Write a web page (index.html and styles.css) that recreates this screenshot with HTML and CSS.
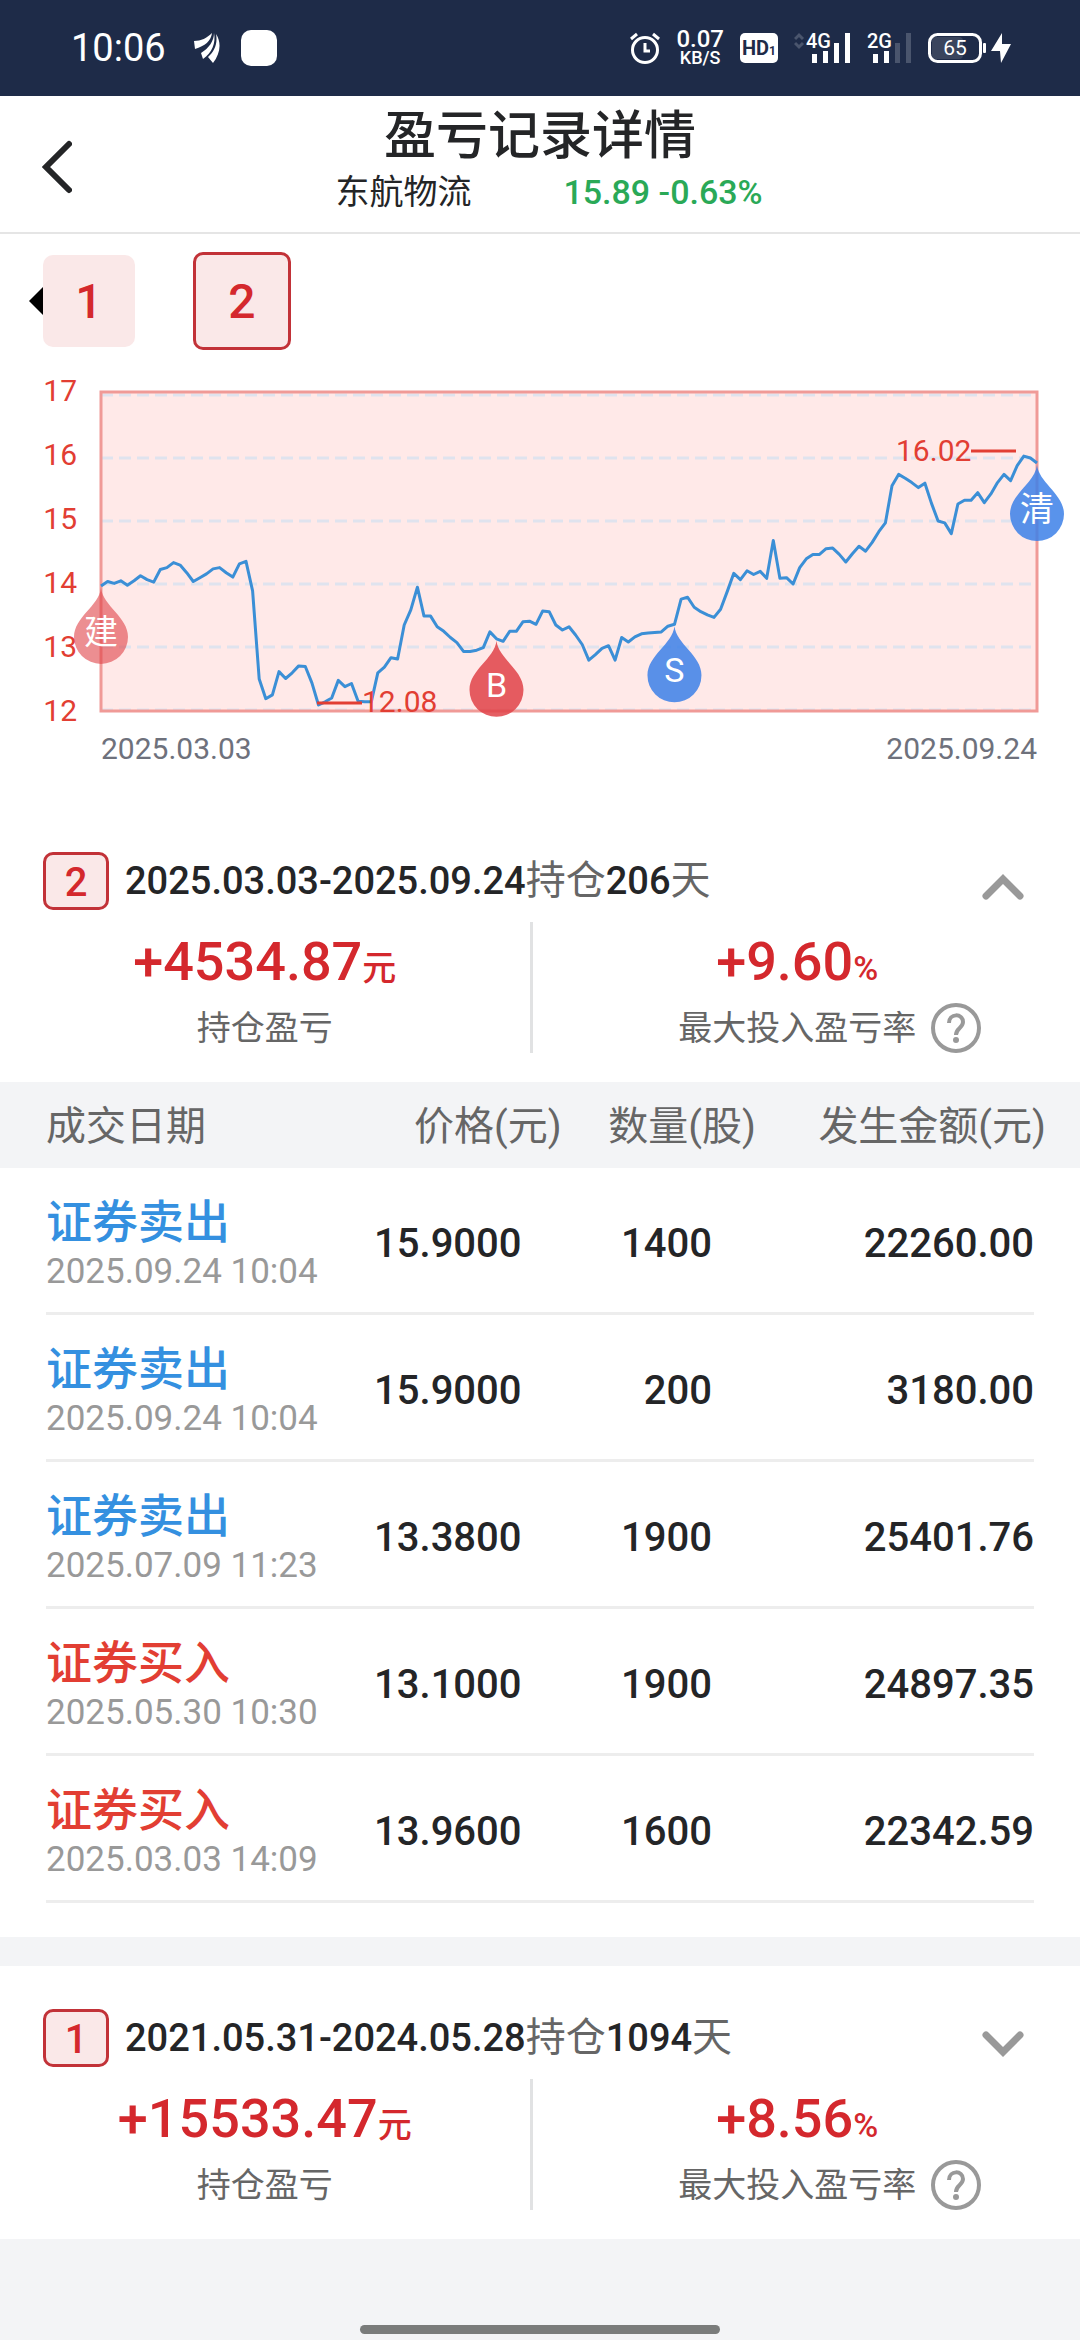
FILE: index.html
```html
<!DOCTYPE html>
<html lang="zh-CN">
<head>
  <meta charset="UTF-8">
  <meta name="viewport" content="width=device-width, initial-scale=1.0">
  <title>盈亏记录详情</title>
  <link rel="stylesheet" href="styles.css">
</head>
<body>
  <div class="status-bar">
    <div class="status-left">
      <span class="clock">10:06</span>
      <svg class="wing" width="26" height="30" viewBox="0 0 26 30" fill="#fff">
        <path d="M0 8 C7 8 13 5 18 0 C17 8 11 13 1 16 Z"/>
        <path d="M20 0 C20 8 15 15 7 20 L9 26 C18 20 22 10 20 0 Z"/>
        <path d="M22 1 C24 11 20 19 14 24 L19 30 C26 21 28 10 22 1 Z"/>
      </svg>
      <span class="app-dot"></span>
    </div>
    <div class="status-right">
      <svg width="30" height="32" viewBox="0 0 30 32" fill="none" stroke="#fff" stroke-width="3">
        <circle cx="15" cy="18" r="12.5"/>
        <path d="M15 11 V19 H20 M1 7 L7 2 M29 7 L23 2"/>
      </svg>
      <div class="speed"><span>0.07</span><small>KB/S</small></div>
      <span class="hd">HD<small>1</small></span>
      <svg width="57" height="42" viewBox="0 -6 57 42">
        <path d="M1 6 L5 2 L9 6 M1 10 L5 14 L9 10" fill="none" stroke="#4a556d" stroke-width="3"/>
        <text class="net" x="12" y="15">4G</text>
        <path d="M18 21h5v9h-5z M29 18h5v12h-5z M40 10h5v20h-5z M51 0h5v30h-5z" fill="#fff"/>
      </svg>
      <svg width="45" height="42" viewBox="0 -6 45 42">
        <text class="net" x="0" y="15">2G</text>
        <path d="M6 21h5v9h-5z M17 18h5v12h-5z" fill="#fff"/>
        <path d="M28 10h5v20h-5z M39 0h5v30h-5z" fill="#4a556d"/>
      </svg>
      <svg width="84" height="30" viewBox="0 0 84 30">
        <rect x="4" y="4" width="31" height="22" rx="4" fill="#3a455d"/>
        <rect x="1.500" y="1.500" width="51" height="27" rx="8" fill="none" stroke="#fff" stroke-width="3"/>
        <rect x="55" y="10" width="3" height="10" rx="1" fill="#fff"/>
        <text class="battery" x="27" y="22">65</text>
        <path d="M74 0 L63 18 H72 L73 30 L83 11 H74 Z" fill="#fff"/>
      </svg>
    </div>
  </div>

  <header class="header">
    <button class="back" type="button" aria-label="返回">
      <svg width="30" height="54" viewBox="0 0 30 54"><path d="M27 4 L4 27 L27 50"/></svg>
    </button>
    <div class="title-box">
      <h1>盈亏记录详情</h1>
      <p class="stock"><span>东航物流</span><span class="quote">15.89 -0.63%</span></p>
    </div>
  </header>

  <main>
    <nav class="tabs">
      <button class="tab" type="button">1</button>
      <button class="tab active" type="button">2</button>
    </nav>

    <svg class="chart" viewBox="0 0 1080 420">
      <rect class="plot" x="101" y="32" width="936" height="319"/>
      <g id="grid"></g>
      <rect class="plot-border" x="101" y="32" width="936" height="319"/>
      <polyline id="priceLine" class="price-line"/>
      <path class="mark" d="M317 343 H362 M971 91 H1016"/>
      <text class="axis" x="362" y="352">12.08</text>
      <text class="axis" x="896" y="101">16.02</text>
      <g id="pins"></g>
      <text class="date" x="101" y="399">2025.03.03</text>
      <text class="date end" x="1037" y="399">2025.09.24</text>
    </svg>

    <section class="card">
      <div class="card-head">
        <span class="badge">2</span>
        <p class="period">2025.03.03-2025.09.24<span>持仓</span>206<span>天</span></p>
        <button class="fold" type="button" aria-label="收起">
          <svg width="42" height="26" viewBox="0 0 42 26"><path d="M4 22 L21 5 L38 22"/></svg>
        </button>
      </div>
      <div class="summary">
        <div class="stat">
          <p class="value">+4534.87<small>元</small></p>
          <p class="label"><span>持仓盈亏</span></p>
        </div>
        <div class="stat">
          <p class="value">+9.60<small>%</small></p>
          <p class="label"><span>最大投入盈亏率</span>
            <button class="help" type="button" aria-label="说明">
              <svg width="50" height="50" viewBox="0 0 50 50"><circle cx="25" cy="25" r="23"/><path d="M18 20 C18 10 32 10 32 19 C32 25 25 25 25 32"/><circle class="dot" cx="25" cy="37" r="3"/></svg>
            </button>
          </p>
        </div>
      </div>
      <table class="trades">
        <thead>
          <tr><th>成交日期</th><th>价格(元)</th><th>数量(股)</th><th>发生金额(元)</th></tr>
        </thead>
        <tbody>
          <tr><td><b class="sell">证券卖出</b><time>2025.09.24 10:04</time></td><td>15.9000</td><td>1400</td><td>22260.00</td></tr>
          <tr><td><b class="sell">证券卖出</b><time>2025.09.24 10:04</time></td><td>15.9000</td><td>200</td><td>3180.00</td></tr>
          <tr><td><b class="sell">证券卖出</b><time>2025.07.09 11:23</time></td><td>13.3800</td><td>1900</td><td>25401.76</td></tr>
          <tr><td><b class="buy">证券买入</b><time>2025.05.30 10:30</time></td><td>13.1000</td><td>1900</td><td>24897.35</td></tr>
          <tr><td><b class="buy">证券买入</b><time>2025.03.03 14:09</time></td><td>13.9600</td><td>1600</td><td>22342.59</td></tr>
        </tbody>
      </table>
    </section>

    <section class="card">
      <div class="card-head">
        <span class="badge">1</span>
        <p class="period">2021.05.31-2024.05.28<span>持仓</span>1094<span>天</span></p>
        <button class="fold" type="button" aria-label="展开">
          <svg width="42" height="26" viewBox="0 0 42 26"><path d="M4 4 L21 21 L38 4"/></svg>
        </button>
      </div>
      <div class="summary">
        <div class="stat">
          <p class="value">+15533.47<small>元</small></p>
          <p class="label"><span>持仓盈亏</span></p>
        </div>
        <div class="stat">
          <p class="value">+8.56<small>%</small></p>
          <p class="label"><span>最大投入盈亏率</span>
            <button class="help" type="button" aria-label="说明">
              <svg width="50" height="50" viewBox="0 0 50 50"><circle cx="25" cy="25" r="23"/><path d="M18 20 C18 10 32 10 32 19 C32 25 25 25 25 32"/><circle class="dot" cx="25" cy="37" r="3"/></svg>
            </button>
          </p>
        </div>
      </div>
    </section>
  </main>

  <div class="home-bar"></div>

  <script src="chart.js"></script>
</body>
</html>
```

FILE: styles.css
```css
* {
  box-sizing: border-box;
  margin: 0;
  padding: 0;
}

body {
  min-height: 100vh;
  display: flex;
  flex-direction: column;
  background: #f3f4f6;
  color: #242527;
  font-family: Roboto, "Noto Sans CJK SC", sans-serif;
}

button {
  border: none;
  background: none;
  font-family: inherit;
  cursor: pointer;
}

svg {
  display: block;
  flex-shrink: 0;
}

/* Status bar */
.status-bar {
  display: flex;
  justify-content: space-between;
  align-items: center;
  height: 96px;
  padding: 0 68px 0 71px;
  background: #1e2b48;
  color: #fff;
}

.status-left,
.status-right {
  display: flex;
  align-items: center;
}

.clock {
  font-size: 38px;
  margin-right: 28px;
}

.wing {
  margin-right: 21px;
}

.app-dot {
  width: 36px;
  height: 36px;
  border-radius: 10px;
  background: #fff;
}

.status-right {
  gap: 16px;
}

.speed {
  display: flex;
  flex-direction: column;
  align-items: center;
  font-size: 24px;
  font-weight: 500;
  line-height: 20px;
}

.speed small {
  font-size: 18px;
  line-height: 18px;
}

.hd {
  width: 38px;
  height: 30px;
  border-radius: 5px;
  background: #fff;
  color: #1e2b48;
  font-size: 20px;
  font-weight: 700;
  line-height: 30px;
  text-align: center;
}

.hd small {
  font-size: 12px;
}

.net {
  fill: #fff;
  font-size: 20px;
  font-weight: 500;
}

.battery {
  fill: #fff;
  font-size: 21px;
  text-anchor: middle;
}

/* Header */
.header {
  display: grid;
  grid-template-columns: 96px 1fr 96px;
  height: 138px;
  background: #fff;
  border-bottom: 2px solid #e5e5e5;
}

.back {
  display: flex;
  align-items: center;
  padding: 6px 0 0 42px;
}

.back path {
  fill: none;
  stroke: #242527;
  stroke-width: 6;
  stroke-linecap: round;
}

.title-box {
  padding-top: 11px;
  text-align: center;
}

h1 {
  font-size: 52px;
  font-weight: 500;
  line-height: 60px;
}

.stock {
  display: flex;
  justify-content: center;
  gap: 92px;
  padding-left: 18px;
  font-size: 34px;
  line-height: 50px;
}

.quote {
  color: #2aa957;
  font-weight: 500;
}

/* Round tabs */
.tabs {
  display: flex;
  align-items: center;
  gap: 58px;
  padding: 18px 43px 10px;
  background: #fff;
}

.tab {
  position: relative;
  width: 92px;
  height: 92px;
  border-radius: 10px;
  background: #fae8e8;
  color: #d4282d;
  font-size: 48px;
  font-weight: 500;
}

.tab.active {
  width: 98px;
  height: 98px;
  border: 3px solid #c23238;
}

.tab:first-child::before {
  content: "";
  position: absolute;
  top: 32px;
  right: 100%;
  border: 14px solid transparent;
  border-left: none;
  border-right-color: #000;
}

/* Price chart */
.chart {
  width: 100%;
  padding-bottom: 29px;
  background: #fff;
  overflow: visible;
}

.plot {
  fill: #ffe9e8;
}

.plot-border {
  fill: none;
  stroke: #f09a97;
  stroke-width: 3;
}

.grid-line {
  stroke: #dfe3ee;
  stroke-width: 3;
  stroke-dasharray: 12 6;
}

.price-line {
  fill: none;
  stroke: #3b8fd6;
  stroke-width: 3;
  stroke-linejoin: round;
}

.mark {
  stroke: #e23e33;
  stroke-width: 3;
}

.axis {
  fill: #e23e33;
  font-size: 30px;
}

.date {
  fill: #6e717c;
  font-size: 30px;
}

.end {
  text-anchor: end;
}

.pin {
  fill: #e04248;
  fill-opacity: .85;
}

.pin.faded {
  fill-opacity: .6;
}

.pin.blue {
  fill: #3c80e8;
}

.pin-text {
  fill: #fff;
  font-size: 34px;
  text-anchor: middle;
}

/* Position cards */
.card {
  padding-top: 43px;
  background: #fff;
}

.card:has(.trades) {
  padding-bottom: 34px;
}

.card + .card {
  margin-top: 29px;
}

.card-head {
  display: flex;
  align-items: center;
  padding: 0 56px 0 43px;
}

.badge {
  width: 66px;
  height: 58px;
  border: 3px solid #c23238;
  border-radius: 10px;
  background: #fae8e8;
  color: #d4282d;
  font-size: 40px;
  font-weight: 500;
  line-height: 56px;
  text-align: center;
}

.period {
  flex: 1;
  padding-left: 16px;
  font-size: 38px;
  font-weight: 500;
  line-height: 58px;
}

.period span {
  color: #666;
  font-size: 40px;
  font-weight: 400;
}

.fold {
  padding-top: 12px;
}

.fold path {
  fill: none;
  stroke: #999;
  stroke-width: 7;
  stroke-linecap: round;
}

.summary {
  display: flex;
  padding: 12px 18px 29px 0;
}

.stat {
  flex: 1;
  height: 131px;
  padding-top: 5px;
  text-align: center;
}

.stat + .stat {
  border-left: 3px solid #e1e2e3;
}

.value {
  color: #d4282d;
  font-size: 54px;
  font-weight: 500;
  line-height: 70px;
}

.value small {
  font-size: 34px;
}

.label {
  display: grid;
  grid-template-columns: 1fr auto 1fr;
  align-items: center;
  color: #666;
  font-size: 34px;
  line-height: 50px;
}

.label span {
  grid-column: 2;
}

.help {
  justify-self: start;
  margin-left: 15px;
}

.help svg {
  fill: none;
  stroke: #999;
  stroke-width: 4;
}

.help .dot {
  fill: #999;
  stroke: none;
}

/* Trade table */
.trades {
  width: 100%;
  border-collapse: collapse;
  table-layout: fixed;
  text-align: right;
}

.trades th {
  height: 86px;
  padding-bottom: 4px;
  background: #f3f4f6;
  color: #666;
  font-size: 40px;
  font-weight: 400;
  white-space: nowrap;
}

.trades th:nth-child(1) {
  width: 33%;
  padding-left: 46px;
  text-align: left;
}

.trades th:nth-child(2) {
  width: 19%;
}

.trades th:nth-child(3) {
  width: 18%;
}

.trades th:nth-child(4) {
  padding-right: 34px;
}

.trades tbody tr {
  background: linear-gradient(#ededed, #ededed) center bottom / calc(100% - 92px) 3px no-repeat;
}

.trades td {
  height: 147px;
  padding: 3px 40px 0 0;
  font-size: 40px;
  font-weight: 500;
}

.trades td:nth-child(1) {
  padding: 5px 0 0 46px;
  text-align: left;
}

.trades td:nth-child(3) {
  padding-right: 44px;
}

.trades td:nth-child(4) {
  padding-right: 46px;
}

.trades b {
  display: block;
  font-size: 46px;
  font-weight: 500;
  line-height: 56px;
}

.trades time {
  display: block;
  color: #999;
  font-size: 35px;
  font-weight: 400;
  line-height: 44px;
}

.sell {
  color: #3490e0;
}

.buy {
  color: #e23e33;
}

/* Gesture bar */
.home-bar {
  width: 360px;
  height: 9px;
  margin: auto auto 6px;
  border-radius: 5px;
  background: #7a7c7b;
}
```

FILE: chart.js
```javascript
const prices = [
  13.97, 14.04, 14.01, 14.05, 13.98, 14.05, 14.13, 14.07, 14.03, 14.23,
  14.26, 14.34, 14.30, 14.18, 14.04, 14.10, 14.16, 14.24, 14.26, 14.18,
  14.11, 14.32, 14.36, 13.89, 12.49, 12.18, 12.24, 12.61, 12.50, 12.59,
  12.70, 12.69, 12.43, 12.08, 12.13, 12.19, 12.47, 12.37, 12.42, 12.14,
  12.13, 12.13, 12.59, 12.68, 12.83, 12.81, 13.35, 13.59, 13.95, 13.49,
  13.49, 13.32, 13.25, 13.15, 13.07, 12.93, 12.93, 12.95, 12.99, 13.24,
  13.13, 13.09, 13.25, 13.25, 13.40, 13.41, 13.36, 13.57, 13.56, 13.35,
  13.27, 13.32, 13.19, 13.04, 12.79, 12.88, 12.98, 13.02, 12.79, 13.15,
  13.08, 13.16, 13.21, 13.22, 13.23, 13.24, 13.33, 13.36, 13.76, 13.79,
  13.63, 13.56, 13.51, 13.47, 13.60, 13.88, 14.17, 14.07, 14.21, 14.15,
  14.20, 14.09, 14.69, 14.09, 14.10, 14.00, 14.26, 14.40, 14.47, 14.47,
  14.56, 14.57, 14.47, 14.35, 14.48, 14.60, 14.52, 14.66, 14.83, 14.97,
  15.56, 15.74, 15.68, 15.61, 15.53, 15.60, 15.28, 15.00, 14.97, 14.80,
  15.27, 15.33, 15.33, 15.45, 15.29, 15.43, 15.61, 15.74, 15.64, 15.88,
  16.03, 16.00, 15.92
];

const pins = [
  { index: 0, text: "建", style: "faded" },
  { index: 60, text: "B", style: "" },
  { index: 87, text: "S", style: "blue" },
  { index: 142, text: "清", style: "blue" }
];

const left = 101;
const right = 1037;

function getX(index) {
  return left + (right - left) * index / (prices.length - 1);
}

function getY(price) {
  return 35 + (17 - price) * 63;
}

let gridHTML = "";
for (let price = 12; price <= 17; price++) {
  const y = getY(price);
  gridHTML += `
    <line class="grid-line" x1="${left}" x2="${right}" y1="${y}" y2="${y}"/>
    <text class="axis end" x="77" y="${41 + (17 - price) * 64}">${price}</text>
  `;
}
document.getElementById("grid").innerHTML = gridHTML;

document.getElementById("priceLine").setAttribute(
  "points",
  prices.map((price, index) => `${getX(index).toFixed(1)},${getY(price).toFixed(1)}`).join(" ")
);

// each pin hangs below its point on the line
document.getElementById("pins").innerHTML = pins.map(pin => `
  <g transform="translate(${getX(pin.index)}, ${getY(prices[pin.index])})">
    <path class="pin ${pin.style}" d="M0 2 C2 20 27 31 27 51 A27 27 0 0 1 -27 51 C-27 31 -2 20 0 2 Z"/>
    <text class="pin-text" x="0" y="58">${pin.text}</text>
  </g>
`).join("");
```
